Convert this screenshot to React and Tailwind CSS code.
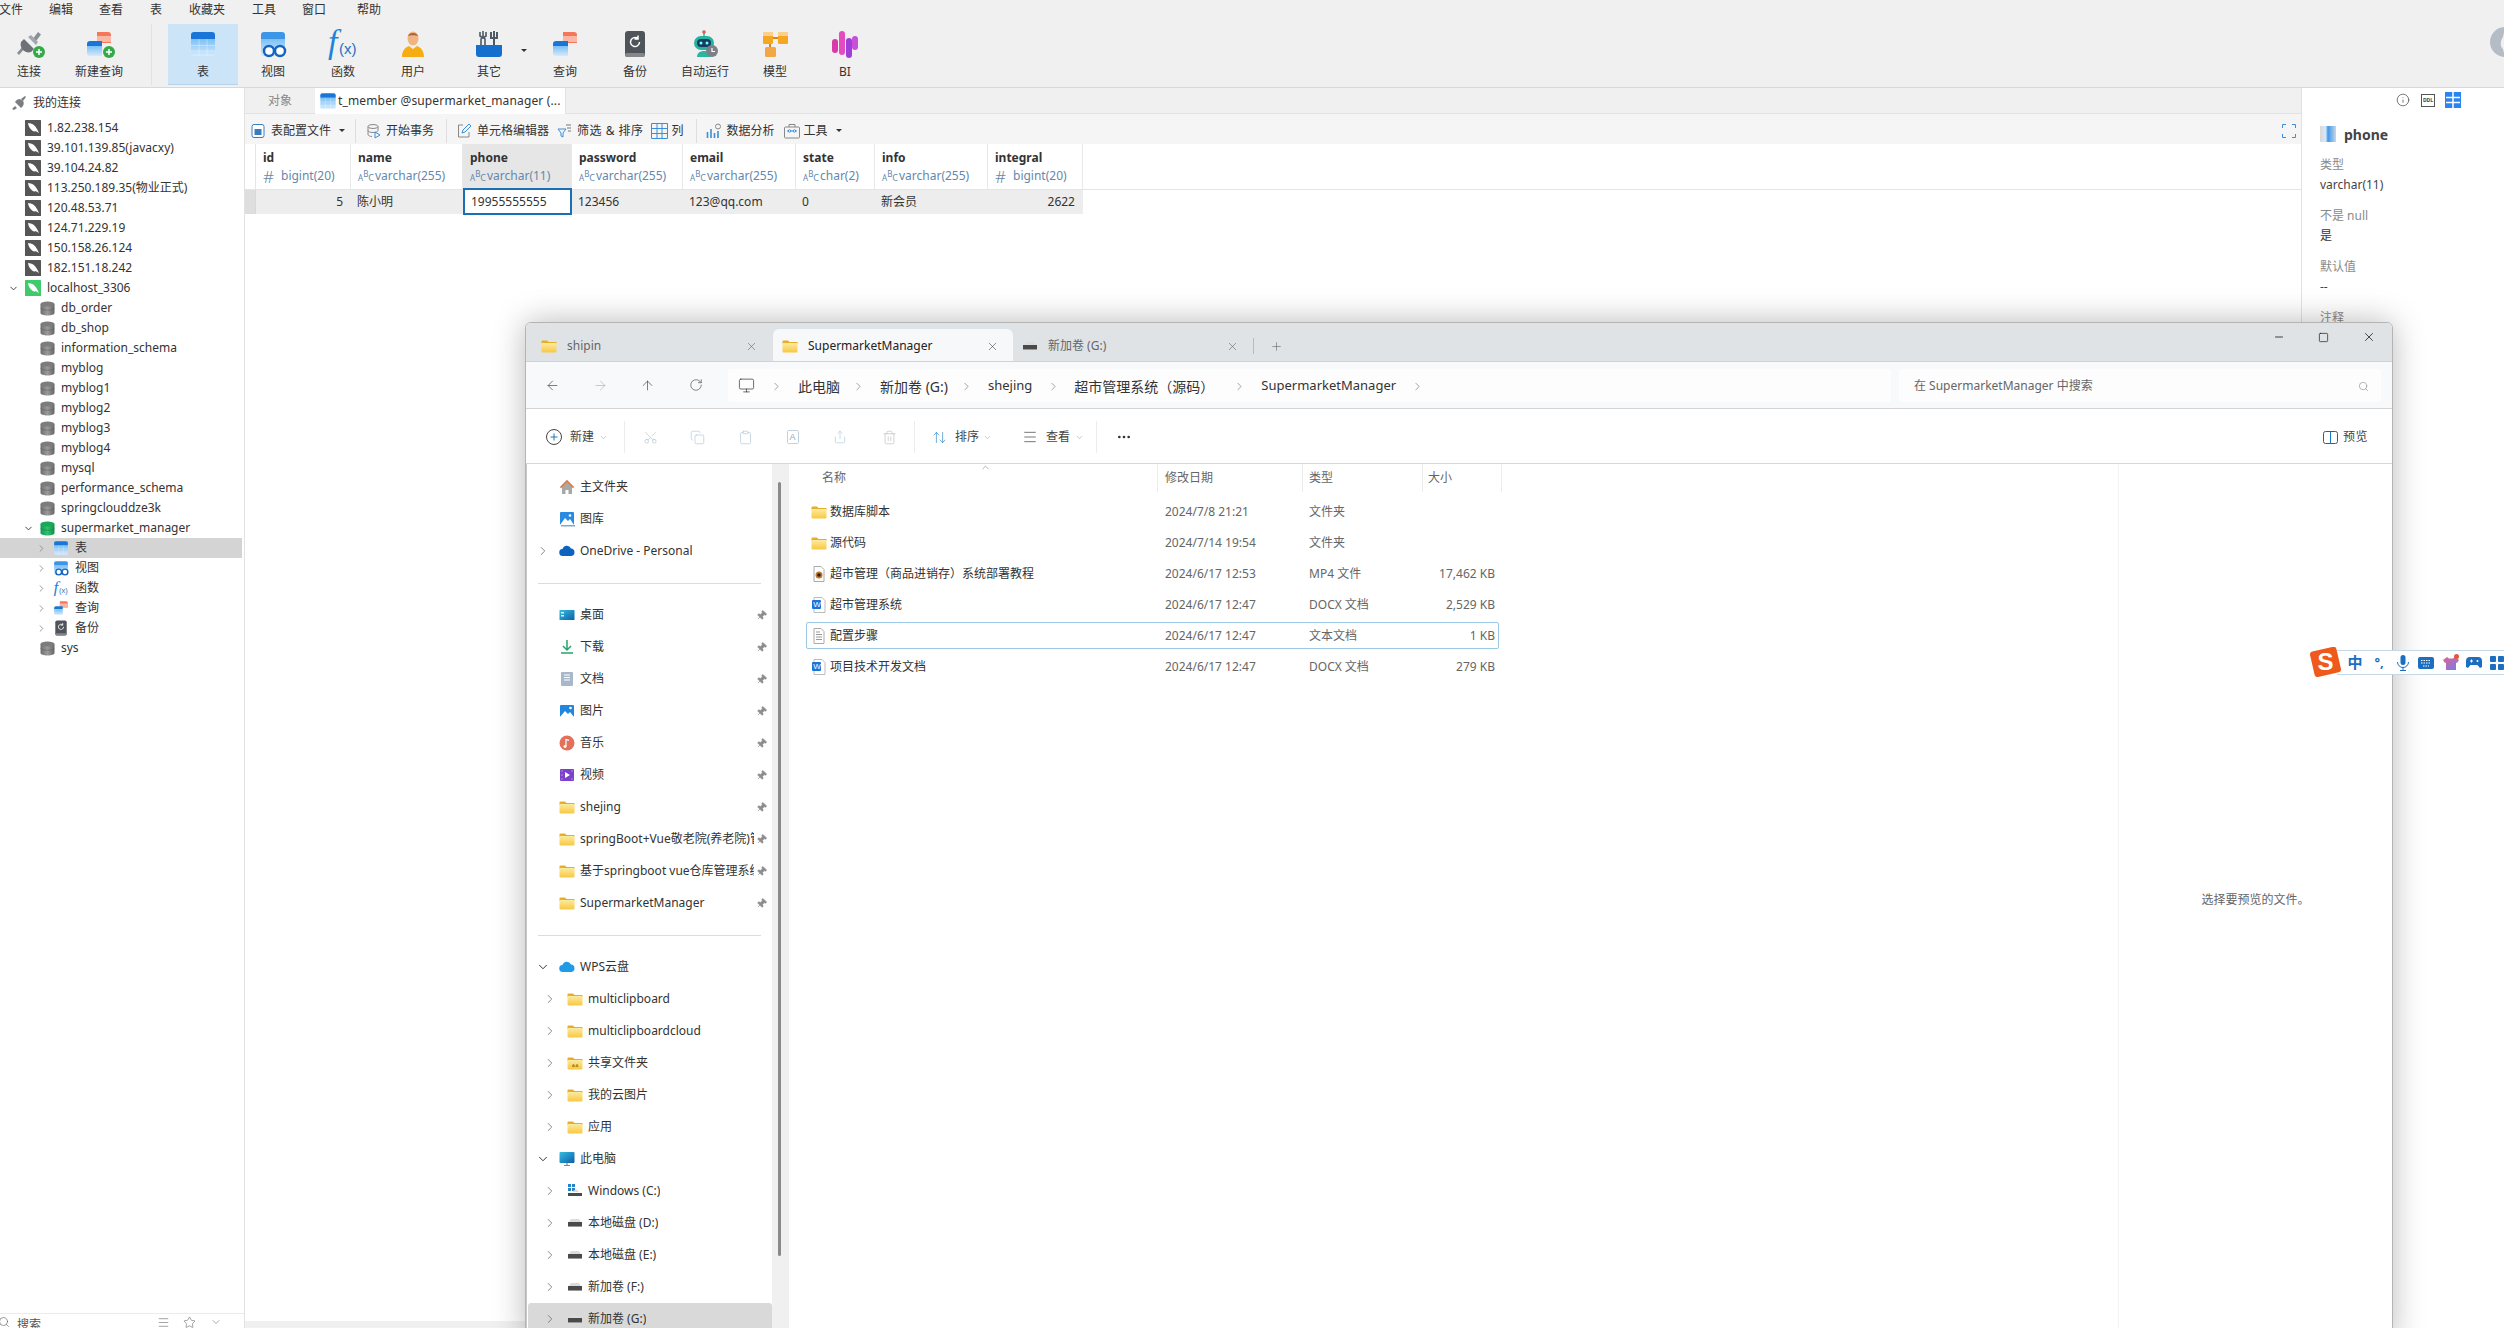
import React from 'react';
import { ChevronRight, ChevronDown, ChevronUp, ArrowLeft, ArrowRight, ArrowUp, RotateCw, Search, Plus, X, Minus, Square, Scissors, Copy, Clipboard, Share, Trash2, ArrowUpDown, Menu, MoreHorizontal, Pin, Info, Star, Monitor } from 'lucide-react';

const Defs = () => (
  <svg className="absolute w-0 h-0">
    <defs>
      <linearGradient id="gFolder" x1="0" y1="0" x2="0" y2="1"><stop offset="0" stopColor="#fdeaa0" /><stop offset="1" stopColor="#f8c840" /></linearGradient>
      <linearGradient id="gTable" x1="0" y1="0" x2="0" y2="1"><stop offset="0" stopColor="#7cc0f5" /><stop offset="1" stopColor="#d5eafc" /></linearGradient>
      <linearGradient id="gDb" x1="0" y1="0" x2="1" y2="0"><stop offset="0" stopColor="#6f6f6f" /><stop offset="0.5" stopColor="#9a9a9a" /><stop offset="1" stopColor="#666" /></linearGradient>
      <linearGradient id="gDbG" x1="0" y1="0" x2="1" y2="0"><stop offset="0" stopColor="#149a50" /><stop offset="0.5" stopColor="#30c070" /><stop offset="1" stopColor="#119048" /></linearGradient>
      <linearGradient id="gPhone" x1="0" y1="0" x2="1" y2="0"><stop offset="0" stopColor="#d8d8d8" /><stop offset="0.35" stopColor="#d8e8f4" /><stop offset="0.5" stopColor="#3d97ea" /><stop offset="1" stopColor="#c8d8e4" /></linearGradient>
      <linearGradient id="gDesk" x1="0" y1="0" x2="1" y2="1"><stop offset="0" stopColor="#35bde0" /><stop offset="1" stopColor="#0b5fa8" /></linearGradient>
      <linearGradient id="gShirt" x1="0" y1="0" x2="1" y2="1"><stop offset="0" stopColor="#e0648c" /><stop offset="1" stopColor="#6f7cf5" /></linearGradient>
    </defs>
  </svg>
);

const S = ({ size = 16, vb = 16, children, className = '' }) => (
  <svg width={size} height={size} viewBox={`0 0 ${vb} ${vb}`} className={'shrink-0 ' + className}>{children}</svg>
);

const Host = ({ green }) => (
  <S><rect width="16" height="16" fill={green ? '#3ecb6c' : '#565656'} rx="0.5" /><path d="M3 3c4 0 7 2 9 6l2 4-3.500-2c-1 .8-2 .6-3-.2C5 9 3.500 6.500 3 3z" fill="#fff" /></S>
);
const Db = ({ green }) => (
  <S size={15} vb={15}><path d="M.5 3v9c0 1.400 3 2.500 7 2.500s7-1.100 7-2.500V3z" fill={green ? 'url(#gDbG)' : 'url(#gDb)'} /><ellipse cx="7.500" cy="3" rx="7" ry="2.500" fill={green ? '#18a858' : '#7c7c7c'} /><path d="M.5 7.500c1 1 3.500 1.700 7 1.700s6-.7 7-1.700" stroke={green ? '#0d8a44' : '#5f5f5f'} fill="none" strokeWidth=".6" /></S>
);
const TableIco = ({ size = 16 }) => (
  <S size={size} vb={28}><path d="M2 9h24v15a2 2 0 0 1-2 2H4a2 2 0 0 1-2-2z" fill="url(#gTable)" /><path d="M2 9V5a3 3 0 0 1 3-3h18a3 3 0 0 1 3 3v4z" fill="#1976d8" /><path d="M10 9v17M18 9v17M2 15.500h24M2 21h24" stroke="#fff" strokeOpacity=".35" strokeWidth="1" /></S>
);
const ViewIco = ({ size = 16 }) => (
  <S size={size} vb={28}><path d="M2 9h24v15a2 2 0 0 1-2 2H4a2 2 0 0 1-2-2z" fill="url(#gTable)" /><path d="M2 9V5a3 3 0 0 1 3-3h18a3 3 0 0 1 3 3v4z" fill="#3d95e6" /><circle cx="10" cy="21" r="5" fill="#fff" stroke="#1565c0" strokeWidth="2.500" /><circle cx="21" cy="21" r="5" fill="#fff" stroke="#1565c0" strokeWidth="2.500" /></S>
);
const FnIco = ({ size = 32 }) => (
  <S size={size} vb={32}>
    <text x="1" y="25" fontFamily="Liberation Serif" fontStyle="italic" fontSize="34" fill="#1d84dc">f</text>
    <text x="12" y="26" fontFamily="Liberation Sans" fontSize="15" fill="#1d6fc4">(x)</text>
  </S>
);
const QueryIco = ({ size = 16 }) => (
  <S size={size} vb={28}><path d="M12 2h11a3 3 0 0 1 3 3v8H12z" fill="#f4775a" /><path d="M12 6h14v6H12z" fill="#f9b8a4" /><path d="M2 14a3 3 0 0 1 3-3h12v5H2z" fill="#1976d8" /><path d="M2 16h15v10H5a3 3 0 0 1-3-3z" fill="url(#gTable)" /></S>
);
const BackupIco = ({ size = 16 }) => (
  <S size={size} vb={28}><rect x="4" y="1" width="20" height="26" rx="3" fill="#4e5459" /><rect x="4" y="23" width="20" height="4" rx="2" fill="#83878b" /><path d="M18.500 12a4.500 4.500 0 1 1-1.700-3.500M17 5.500v3.500h-3.500" stroke="#fff" strokeWidth="1.500" fill="none" /></S>
);
const PlugIco = ({ size = 28 }) => (
  <S size={size} vb={28}><path d="M17 10l6-8 3 2.500-6 8zM11 17l-7 8-2-2 7-8z" fill="#8a8f94" /><path d="M9 9l10 10-3 3c-3 1-6 0-8-2s-3-5-2-8z" fill="#6c7277" /><path d="M13 7l8 8 2-3-7-7z" fill="#a2a7ab" /></S>
);
const PlusBadge = () => (
  <svg width="12" height="12" viewBox="0 0 12 12" className="absolute -right-[2px] bottom-0"><circle cx="6" cy="6" r="6" fill="#35a848" /><path d="M3 6h6M6 3v6" stroke="#fff" strokeWidth="1.500" /></svg>
);
const UserIco = () => (
  <S size={28} vb={28}><ellipse cx="14" cy="8.500" rx="5.500" ry="7" fill="#f0b483" /><path d="M9 6c1-4 9-4 10 0-2-1-8-1-10 0z" fill="#a3643a" /><path d="M3 27c0-7 4-10 7-11l4 3 4-3c3 1 7 4 7 11z" fill="#f6ad13" /></S>
);
const ToolsIco = () => (
  <S size={28} vb={28}>
    <path d="M8 1v6l-2 2v8h4V9L8 7M5 2v4l3 2 3-2V2" stroke="#4d5a66" strokeWidth="1.600" fill="none" />
    <path d="M19 1v16M16 2v6h6V2" stroke="#4d5a66" strokeWidth="2" fill="none" />
    <path d="M1 15h26v9a3 3 0 0 1-3 3H4a3 3 0 0 1-3-3z" fill="#1470cc" />
  </S>
);
const RobotIco = () => (
  <S size={28} vb={28}>
    <circle cx="13" cy="2" r="1.800" fill="#e0594a" /><path d="M13 3v3" stroke="#3bb0a0" strokeWidth="1.500" />
    <rect x="3" y="6" width="20" height="14" rx="7" fill="#26b3a0" /><rect x="6" y="9" width="14" height="8" rx="4" fill="#143c5e" />
    <circle cx="10" cy="13" r="1.500" fill="#7ff" /><circle cx="16" cy="13" r="1.500" fill="#7ff" />
    <path d="M6 27c0-4 3-6 7-6s7 2 7 6z" fill="#2ab59f" />
    <circle cx="21" cy="21" r="6" fill="#7b8187" /><path d="M21 18v3.500h3" stroke="#fff" strokeWidth="1.200" fill="none" />
  </S>
);
const ModelIco = () => (
  <S size={28} vb={28}>
    <rect x="2" y="2" width="10" height="12" rx="1.500" fill="#f5a623" /><rect x="17" y="2" width="10" height="12" rx="1.500" fill="#f5a623" /><rect x="4" y="17" width="11" height="10" rx="1.500" fill="#f2a644" />
    <path d="M12 8h5M9 14v3" stroke="#d08a20" strokeWidth="2" /><path d="M2 2h10v4H2zM17 2h10v4H17z" fill="#fcd08a" />
  </S>
);
const BiIco = () => (
  <S size={28} vb={28}>
    <rect x="1" y="9" width="6" height="14" rx="3" fill="#d83aa8" /><rect x="8" y="1" width="6" height="24" rx="3" fill="#e34cc0" /><rect x="15" y="8" width="6" height="20" rx="3" fill="#a23ed8" /><rect x="21" y="6" width="6" height="14" rx="3" fill="#c750d8" />
  </S>
);
const Folder = ({ people }) => (
  <S><path d="M.5 3.500a1 1 0 0 1 1-1H6l1.500 1.500h8v2H.5z" fill="#e6ae28" /><path d="M.5 5h15v8.500a1 1 0 0 1-1 1h-13a1 1 0 0 1-1-1z" fill="url(#gFolder)" />{people && <path d="M5 12c0-2 1-3 1.500-3S8 10 8 12zM8.500 12c0-2 1-3 1.500-3s1.500 1 1.500 3z" fill="#b98a20" />}</S>
);
const Drive = () => (
  <S><path d="M2 7l2-3h8l2 3z" fill="#dcdcdc" /><rect x="1" y="7" width="14" height="4" fill="#4a4a4a" /><rect x="1" y="11" width="14" height="1" fill="#9a9a9a" /></S>
);
const WinDrive = () => (
  <S><path d="M1 1h3v3H1zM5 1h3v3H5zM1 5h3v3H1zM5 5h3v3H5z" fill="#2683c6" /><path d="M5 9l4-3 3 3z" fill="#dcdcdc" /><rect x="1" y="10" width="14" height="3" fill="#4a4a4a" /></S>
);
const HomeI = () => (<S><path d="M8 1L1 8l1 1 1-1v7h3.500v-4h3v4H13V8l1 1 1-1z" fill="#a8a8a8" /><path d="M8 1L1 8l1 1 6-6 6 6 1-1z" fill="#e8743a" /></S>);
const GalleryI = () => (<S><rect x="1" y="1" width="14" height="13" rx="1" fill="#2a8ae0" /><path d="M1 14l5-7 3 3 2-2 4 6z" fill="#fff" /><rect x="2" y="14" width="14" height="1.500" fill="#7fa9cf" /><circle cx="11" cy="4.500" r="1.300" fill="#fff" /></S>);
const CloudI = ({ c = '#0c64c0' }) => (<S><path d="M4 13a3.500 3.500 0 0 1-.5-7A4.500 4.500 0 0 1 12 5.500 3.800 3.800 0 0 1 12.500 13z" fill={c} /></S>);
const DeskI = () => (<S><rect x=".5" y="3" width="15" height="10" rx=".5" fill="url(#gDesk)" /><rect x="2" y="5" width="3" height="1.500" fill="#d8f2fa" /><rect x="2" y="8" width="3" height="1.500" fill="#d8f2fa" /></S>);
const DownI = () => (<S><path d="M8 1v9M4 7l4 4 4-4" stroke="#25a56b" strokeWidth="1.500" fill="none" /><path d="M2 14h12" stroke="#25a56b" strokeWidth="1.500" /></S>);
const DocI = () => (<S><rect x="2" y="1" width="12" height="14" rx="1" fill="#a9b8c8" /><path d="M5 4h6M5 6.500h6M5 9h6" stroke="#fff" strokeWidth="1" /></S>);
const PicI = () => (<S><rect x="1" y="2" width="14" height="12" rx="1" fill="#1f87e0" /><path d="M1 14l5-6 3 3 2-2 4 5z" fill="#fff" /><circle cx="11.500" cy="5" r="1.300" fill="#fff" /></S>);
const MusicI = () => (<S><circle cx="8" cy="8" r="7.500" fill="#e4705a" /><path d="M7 11.500V4.500l3 .8" stroke="#fff" strokeWidth="1.200" fill="none" /><circle cx="6" cy="11.500" r="1.400" fill="#fff" /></S>);
const VideoI = () => (<S><rect x="1" y="2" width="14" height="12" rx="1" fill="#7b40cc" /><path d="M6 5l5 3-5 3z" fill="#fff" /><path d="M2.500 4h1M2.500 8h1M2.500 12h1M12.500 4h1M12.500 12h1" stroke="#ddd" /></S>);
const PcI = () => (<S><rect x=".5" y="1" width="15" height="11" rx="1" fill="url(#gDesk)" /><path d="M8 12v2M5 14.500h6" stroke="#6d8ca3" strokeWidth="1.200" /></S>);
const Mp4I = () => (<S><path d="M3 .5h7l3 3v12H3z" fill="#fff" stroke="#aaa" /><circle cx="8" cy="9" r="3.500" fill="#c8762a" /><circle cx="8" cy="9" r="1.800" fill="#222" /></S>);
const WordI = () => (
  <S><path d="M3 .5h8l3 3v12H3z" fill="#fff" stroke="#bbb" /><rect x="1" y="3" width="9" height="9" rx="1" fill="#1b75d8" /><text x="2.300" y="10.300" fontSize="8" fill="#fff" fontFamily="Liberation Sans">W</text></S>
);
const TxtI = () => (<S><path d="M3 .5h7l3 3v12H3z" fill="#fff" stroke="#aaa" /><path d="M5 4h4M5 6.500h6M5 9h6M5 11.500h6" stroke="#999" /></S>);

const menus = [['文件', 'ml-[-1px]'], ['编辑', 'ml-[26px]'], ['查看', 'ml-[26px]'], ['表', 'ml-[27px]'], ['收藏夹', 'ml-[27px]'], ['工具', 'ml-[27px]'], ['窗口', 'ml-[26px]'], ['帮助', 'ml-[31px]']];

const Tool = ({ icon, label, cls = 'w-[70px]', sel }) => (
  <div className={`flex flex-col items-center h-[61px] pt-[6px] relative ${cls} ${sel ? 'bg-[#cce4f7] border-b border-[#b5d4ec]' : ''}`}>
    <div className="relative h-[28px] flex items-center justify-center">{icon}</div>
    <div className="mt-[6px] leading-4 text-[#333]">{label}</div>
  </div>
);

const hosts = ['1.82.238.154', '39.101.139.85(javacxy)', '39.104.24.82', '113.250.189.35(物业正式)', '120.48.53.71', '124.71.229.19', '150.158.26.124', '182.151.18.242'];
const dbs = ['db_order', 'db_shop', 'information_schema', 'myblog', 'myblog1', 'myblog2', 'myblog3', 'myblog4', 'mysql', 'performance_schema', 'springclouddze3k'];
const subs = [['表', <TableIco />, true], ['视图', <ViewIco />], ['函数', <FnIco size={16} />], ['查询', <QueryIco />], ['备份', <BackupIco size={16} />]];

const Sidebar = () => (
  <div className="w-[245px] shrink-0 flex flex-col border-r border-[#e2e2e2] text-[#333]">
    <div className="h-[30px] flex items-center pl-[11px] gap-[6px] shrink-0">
      <svg width="16" height="14" viewBox="0 0 16 14"><path d="M1 13l3-3 2 2-3 2zM4 6l6 6 2-2c1-2 1-4 0-5L9 3C7 3 5 4 4 6zM10 3l4-3 1 1-3 4z" fill="#7b7f83" /></svg>
      <span>我的连接</span>
    </div>
    {hosts.map(h => (
      <div key={h} className="h-5 flex items-center pl-[25px] gap-[6px] whitespace-nowrap"><Host /><span>{h}</span></div>
    ))}
    <div className="h-5 flex items-center pl-[8px] gap-[6px]"><ChevronDown size={11} strokeWidth={2} className="text-[#333]" /><Host green /><span>localhost_3306</span></div>
    {dbs.map(d => (
      <div key={d} className="h-5 flex items-center pl-[40px] gap-[6px]"><Db /><span>{d}</span></div>
    ))}
    <div className="h-5 flex items-center pl-[23px] gap-[6px]"><ChevronDown size={11} strokeWidth={2} className="text-[#333]" /><Db green /><span>supermarket_manager</span></div>
    {subs.map(([t, ic, sel]) => (
      <div key={t} className={`h-5 flex items-center pl-[36px] mr-[2px] ${sel ? 'bg-[#d4d4d4]' : ''}`}>
        <ChevronRight size={11} strokeWidth={1.800} className="text-[#888]" /><span className="w-[6px]" />{ic}<span className="ml-[6px]">{t}</span>
      </div>
    ))}
    <div className="h-5 flex items-center pl-[40px] gap-[6px]"><Db /><span>sys</span></div>
    <div className="mt-auto h-[15px] overflow-hidden border-t border-[#ececec] flex items-start pt-[2px] text-[#555] shrink-0">
      <Search size={12} strokeWidth={1.200} className="shrink-0 -ml-[2px]" /><span className="ml-[7px]">搜索</span>
      <Menu size={13} strokeWidth={1} className="ml-[116px]" /><Star size={13} strokeWidth={1} className="ml-[13px]" /><ChevronDown size={12} strokeWidth={1} className="ml-[14px]" />
    </div>
  </div>
);

const Abc = () => (
  <span className="inline-flex items-end w-[15px] text-[8px] leading-none h-[12px] shrink-0"><span>A</span><span className="mb-[4px]">B</span><span className="text-[9px]">C</span></span>
);

const cols = [
  ['id', 'bigint(20)', 'w-[95px]', '#'], ['name', 'varchar(255)', 'w-[112px]'], ['phone', 'varchar(11)', 'w-[109px]'], ['password', 'varchar(255)', 'w-[111px]'],
  ['email', 'varchar(255)', 'w-[113px]'], ['state', 'char(2)', 'w-[79px]'], ['info', 'varchar(255)', 'w-[113px]'], ['integral', 'bigint(20)', 'w-[95px]', '#'],
];
const cells = ['5', '陈小明', '19955555555', '123456', '123@qq.com', '0', '新会员', '2622'];

const Sep = ({ cls }) => <div className={`w-px h-[24px] bg-[#dedede] ${cls}`} />;
const Caret = ({ cls = '' }) => <span className={`w-0 h-0 border-x-[3px] border-x-transparent border-t-[3.500px] border-t-[#333] ${cls}`} />;

const Grid = () => (
  <div className="pl-0">
    <div className="flex h-[46px] border-b border-[#e4e4e4]">
      <div className="w-[11px] border-r border-[#e4e4e4]" />
      {cols.map((c, i) => (
        <div key={c[0]} className={`${c[2]} shrink-0 border-r border-[#e8e8e8] pl-[7px] flex flex-col ${i === 2 ? 'bg-[#e6e6e6]' : ''}`}>
          <div className="h-[23px] pt-[6px] font-bold text-[#333] leading-4">{c[0]}</div>
          <div className="flex items-center text-[#6488ad] h-[18px] whitespace-nowrap">
            {c[3] ? <span className="text-[17px] font-light w-[16px] leading-none">#</span> : <Abc />}
            <span className="ml-[2px]">{c[1]}</span>
          </div>
        </div>
      ))}
    </div>
    <div className="flex h-[24px] w-[838px] bg-[#ededed] text-[#333]">
      <div className="w-[11px] bg-[#dedede] border-r border-[#d8d8d8]" />
      {cols.map((c, i) => (
        <div key={c[0]} className={`${c[2]} shrink-0 flex items-center pl-[6px] pr-[8px] ${i === 2 ? 'bg-white border-2 border-[#1a6fb5] h-[27px] -mt-[2px] relative' : ''} ${i === 0 || i === 7 ? 'justify-end' : ''}`}>{cells[i]}</div>
      ))}
    </div>
  </div>
);

const MainArea = () => (
  <div className="flex-1 min-w-0 flex flex-col">
    <div className="h-[26px] bg-[#f0f0f0] flex items-end border-b border-[#e2e2e2] shrink-0">
      <div className="w-[70px] h-full flex items-center justify-center text-[#888]">对象</div>
      <div className="w-[251px] h-[26px] bg-white flex items-center pl-[4px] border-r border-[#e2e2e2] whitespace-nowrap text-[#333] overflow-hidden -mb-px tracking-[0.15px]">
        <TableIco size={18} /><span className="ml-[1px]">t_member @supermarket_manager (...</span>
      </div>
    </div>
    <div className="h-[30px] bg-[#f5f5f5] flex items-center pt-[3px] text-[#333] shrink-0 whitespace-nowrap">
      <S className="ml-[6px]" size={14} vb={14}><rect x="1" y=".5" width="12" height="13" rx="2" fill="#fff" stroke="#3a7dbf" /><rect x="3.500" y="5" width="7" height="6" fill="#3a7dbf" /></S>
      <span className="ml-[6px]">表配置文件</span><Caret cls="ml-[8px]" /><Sep cls="ml-[10px]" />
      <svg width="16" height="16" viewBox="0 0 16 16" className="ml-[10px]"><ellipse cx="7" cy="3.500" rx="5" ry="2" fill="none" stroke="#888" /><path d="M2 3.500v8c0 1 2 2 4 2M12 3.500v4M2 7.500c0 1 2 2 5 2s5-1 5-2" fill="none" stroke="#888" /><path d="M9 9l5 3-5 3z" fill="none" stroke="#3a8fd8" /></svg>
      <span className="ml-[4px]">开始事务</span><Sep cls="ml-[12px]" />
      <svg width="15" height="15" viewBox="0 0 15 15" className="ml-[10px]"><path d="M6 2H1.500v12H12V9" fill="none" stroke="#888" /><path d="M5 10l1-3 6-6 2 2-6 6z" fill="none" stroke="#3a8fd8" /></svg>
      <span className="ml-[5px]">单元格编辑器</span>
      <svg width="16" height="16" viewBox="0 0 16 16" className="ml-[8px]"><path d="M1 6h8L6 10v4l-2-1v-3z" fill="none" stroke="#3a8fd8" /><path d="M9 2h5M10 5h4M11 8h3" stroke="#777" /></svg>
      <span className="ml-[4px] tracking-[0.5px]">筛选 &amp; 排序</span>
      <svg width="17" height="16" viewBox="0 0 17 16" className="ml-[7px]"><path d="M.5.5h16v15H.5zM6 .5v15M11 .5v15M.5 5.500h16M.5 10.500h16" fill="none" stroke="#3a8fd8" /></svg>
      <span className="ml-[4px]">列</span><Sep cls="ml-[12px]" />
      <svg width="17" height="16" viewBox="0 0 17 16" className="ml-[9px]"><path d="M1.500 9v6M5 6v9M8.500 10v5M12 8v7" stroke="#3a8fd8" strokeWidth="1.600" /><circle cx="12" cy="3.500" r="2.500" fill="none" stroke="#888" /></svg>
      <span className="ml-[4px]">数据分析</span>
      <svg width="16" height="16" viewBox="0 0 16 16" className="ml-[9px]"><rect x=".5" y="4" width="15" height="11" rx="1" fill="none" stroke="#888" /><path d="M5 4V1.500h6V4" fill="none" stroke="#888" /><path d="M3 8h10" stroke="#3a8fd8" /><circle cx="5.500" cy="8" r="1.200" fill="#fff" stroke="#3a8fd8" /><circle cx="10.500" cy="8" r="1.200" fill="#fff" stroke="#3a8fd8" /></svg>
      <span className="ml-[4px]">工具</span><Caret cls="ml-[8px]" />
      <svg width="14" height="14" viewBox="0 0 14 14" className="ml-auto mr-[5px]"><path d="M4 .5H.5V4M10 .5h3.500V4M4 13.500H.5V10M10 13.500h3.500V10" fill="none" stroke="#3a8fd8" /></svg>
    </div>
    <Grid />
    <div className="mt-auto h-[7px] bg-[#f0f0f0]" />
  </div>
);

const RightPanel = () => (
  <div className="w-[203px] shrink-0 border-l border-[#e2e2e2] pl-[18px] text-[#444]">
    <div className="h-[24px] flex items-center">
      <Info size={14} strokeWidth={1.200} className="ml-[76px] text-[#444]" />
      <div className="ml-[11px] w-[14px] h-[13px] border border-[#555] text-[5px] leading-none font-bold flex items-center justify-center">DDL</div>
      <svg width="16" height="16" viewBox="0 0 16 16" className="ml-[10px]"><rect width="16" height="16" fill="#2a85f0" /><path d="M8 0v16M1 5.500h14M1 10.500h14" stroke="#fff" strokeWidth="1.500" /></svg>
    </div>
    <div className="mt-[12px] h-5 flex items-center">
      <svg width="16" height="16" viewBox="0 0 16 16"><rect width="16" height="16" fill="url(#gPhone)" /></svg>
      <span className="ml-[8px] text-[14px] font-bold text-[#444]">phone</span>
    </div>
    <div className="mt-[11px]">
      <div className="h-5 leading-5 text-[#8a8a8a]">类型</div><div className="h-5 leading-5">varchar(11)</div>
      <div className="h-5 leading-5 mt-[11px] text-[#8a8a8a]">不是 null</div><div className="h-5 leading-5 text-[#333]">是</div>
      <div className="h-5 leading-5 mt-[11px] text-[#8a8a8a]">默认值</div><div className="h-5 leading-5">--</div>
      <div className="h-5 leading-5 mt-[11px] text-[#8a8a8a]">注释</div>
    </div>
  </div>
);

const PinI = () => <Pin size={11} className="text-[#8e8e8e] fill-[#8e8e8e] rotate-45 shrink-0" strokeWidth={1.500} />;

const NavRow = ({ icon, text, pin, chev, nested, sel }) => (
  <div className={`h-[32px] flex items-center relative ${nested ? 'pl-[18px]' : 'pl-[11px]'} ${sel ? 'bg-[#d9d9d9] rounded-[3px] ml-[1px]' : ''}`}>
    <div className={`w-[10px] shrink-0 flex justify-center ${sel ? '-ml-px' : ''}`}>
      {chev === 'r' && <ChevronRight size={14} strokeWidth={1.500} className="text-[#777] shrink-0" />}
      {chev === 'd' && <ChevronDown size={14} strokeWidth={1.700} className="text-[#333] shrink-0" />}
    </div>
    <div className={`${nested ? 'ml-[12px]' : 'ml-[11px]'} w-[16px] flex justify-center shrink-0`}>{icon}</div>
    <span className={`ml-[5px] whitespace-nowrap overflow-hidden text-[#333] ${pin ? 'w-[174px] shrink-0' : ''}`}>{text}</span>
    {pin && <span className="ml-[2px]"><PinI /></span>}
  </div>
);

const NavDiv = ({ cls }) => <div className={`h-px bg-[#dcdcdc] mx-[11px] ${cls}`} />;

const quick = [[<DeskI />, '桌面'], [<DownI />, '下载'], [<DocI />, '文档'], [<PicI />, '图片'], [<MusicI />, '音乐'], [<VideoI />, '视频'], [<Folder />, 'shejing'], [<Folder />, 'springBoot+Vue敬老院(养老院)管理系统'], [<Folder />, '基于springboot vue仓库管理系统'], [<Folder />, 'SupermarketManager']];

const NavPane = () => (
  <div className="w-[246px] shrink-0 overflow-hidden pt-[7px] border-l border-[#c8c8c8]">
    <NavRow icon={<HomeI />} text="主文件夹" />
    <NavRow icon={<GalleryI />} text="图库" />
    <NavRow icon={<CloudI />} text="OneDrive - Personal" chev="r" />
    <NavDiv cls="mt-[16px] mb-[15px]" />
    {quick.map(([ic, t]) => <NavRow key={t} icon={ic} text={t} pin />)}
    <NavDiv cls="mt-[16px] mb-[15px]" />
    <NavRow icon={<CloudI c="#1f9be8" />} text="WPS云盘" chev="d" />
    <NavRow nested icon={<Folder />} text="multiclipboard" chev="r" />
    <NavRow nested icon={<Folder />} text="multiclipboardcloud" chev="r" />
    <NavRow nested icon={<Folder people />} text="共享文件夹" chev="r" />
    <NavRow nested icon={<Folder />} text="我的云图片" chev="r" />
    <NavRow nested icon={<Folder />} text="应用" chev="r" />
    <NavRow icon={<PcI />} text="此电脑" chev="d" />
    <NavRow nested icon={<WinDrive />} text="Windows (C:)" chev="r" />
    <NavRow nested icon={<Drive />} text="本地磁盘 (D:)" chev="r" />
    <NavRow nested icon={<Drive />} text="本地磁盘 (E:)" chev="r" />
    <NavRow nested icon={<Drive />} text="新加卷 (F:)" chev="r" />
    <NavRow nested sel icon={<Drive />} text="新加卷 (G:)" chev="r" />
  </div>
);

const files = [
  [<Folder />, '数据库脚本', '2024/7/8 21:21', '文件夹', ''],
  [<Folder />, '源代码', '2024/7/14 19:54', '文件夹', ''],
  [<Mp4I />, '超市管理（商品进销存）系统部署教程', '2024/6/17 12:53', 'MP4 文件', '17,462 KB'],
  [<WordI />, '超市管理系统', '2024/6/17 12:47', 'DOCX 文档', '2,529 KB'],
  [<TxtI />, '配置步骤', '2024/6/17 12:47', '文本文档', '1 KB'],
  [<WordI />, '项目技术开发文档', '2024/6/17 12:47', 'DOCX 文档', '279 KB'],
];

const FileList = () => (
  <div className="w-[1330px] shrink-0 border-r border-[#f3f3f3]">
    <div className="h-[28px] flex text-[#666] relative">
      <ChevronUp size={11} strokeWidth={1.200} className="absolute left-[191px] -top-[2px] text-[#777]" />
      <div className="w-[369px] pl-[33px] flex items-center border-r border-[#ececec]">名称</div>
      <div className="w-[145px] pl-[7px] flex items-center border-r border-[#ececec]">修改日期</div>
      <div className="w-[120px] pl-[6px] flex items-center border-r border-[#ececec]">类型</div>
      <div className="w-[79px] pl-[5px] flex items-center border-r border-[#ececec]">大小</div>
    </div>
    <div className="pt-[4px]">
      {files.map((f, i) => (
        <div key={f[1]} className="h-[31px] flex items-center">
          <div className={`h-[27px] flex items-center w-[693px] ml-[17px] whitespace-nowrap rounded-[2px] ${i === 4 ? 'border border-[#9cc8e8]' : 'border border-transparent'}`}>
            <div className="w-[358px] flex items-center shrink-0 text-[#333] pl-[4px]">{f[0]}<span className="ml-[3px]">{f[1]}</span></div>
            <div className="w-[144px] shrink-0 text-[#666]">{f[2]}</div>
            <div className="w-[120px] shrink-0 text-[#666]">{f[3]}</div>
            <div className="w-[66px] shrink-0 text-right text-[#666]">{f[4]}</div>
          </div>
        </div>
      ))}
    </div>
  </div>
);

const Cmd = ({ cls, children }) => <span className={`w-[16px] flex justify-center shrink-0 ${cls}`}>{children}</span>;
const Chev = ({ cls }) => <ChevronDown size={9} strokeWidth={1.200} className={`text-[#888] ${cls}`} />;
const Crumb = ({ cls = '' }) => <ChevronRight size={13} strokeWidth={1} className={`text-[#555] shrink-0 ${cls}`} />;
const CmdSep = ({ cls }) => <div className={`w-px h-[32px] bg-[#ececec] shrink-0 ${cls}`} />;

const TabRow = ({ w, active, icon, text, closeCls }) => (
  <div className={`h-[32px] pt-[2px] flex items-center shrink-0 ${w} ${active ? 'bg-[#f6f8f9] rounded-t-[6px] text-[#222]' : 'text-[#666]'}`}>
    {icon}
    <span className="ml-[10px] whitespace-nowrap">{text}</span>
    <X size={13} strokeWidth={1} className={`ml-auto ${closeCls} ${active ? 'text-[#333]' : 'text-[#555]'}`} />
  </div>
);

const Explorer = () => (
  <div className="absolute left-[525px] top-[322px] w-[1868px] h-[1020px] bg-white rounded-t-[6px] border border-[#b4b4b4] shadow-[0_0_32px_rgba(0,0,0,0.28)] flex flex-col text-[#333]">
    <div className="h-[39px] bg-[#dfe3e6] rounded-t-[6px] flex items-end shrink-0 border-b border-[#cfd3d6]">
      <TabRow w="w-[247px]" icon={<span className="ml-[15px]"><Folder /></span>} text="shipin" closeCls="mr-[15px]" />
      <TabRow w="w-[240px]" active icon={<span className="ml-[9px]"><Folder /></span>} text="SupermarketManager" closeCls="mr-[14px]" />
      <TabRow w="w-[240px]" icon={<span className="ml-[9px]"><Drive /></span>} text="新加卷 (G:)" closeCls="mr-[14px]" />
      <div className="w-px h-[16px] bg-[#bbb] self-center mt-[8px]" />
      <Plus size={13} strokeWidth={1} className="ml-[16px] self-center mt-[8px] text-[#555]" />
      <div className="ml-auto self-start flex items-center h-[28px] text-[#222]">
        <Minus size={12} strokeWidth={1.700} /><Square size={11} strokeWidth={1.600} className="ml-[33px]" /><X size={14} strokeWidth={1.400} className="ml-[33px] mr-[16px]" />
      </div>
    </div>
    <div className="h-[47px] bg-[#f7f9fa] flex items-center border-b border-[#d4d4d4] shrink-0">
      <ArrowLeft size={15} strokeWidth={1} className="ml-[19px] text-[#333]" />
      <ArrowRight size={15} strokeWidth={1} className="ml-[33px] text-[#aaa]" />
      <ArrowUp size={15} strokeWidth={1} className="ml-[32px] text-[#333]" />
      <RotateCw size={14} strokeWidth={1} className="ml-[34px] text-[#333]" />
      <div className="ml-[25px] w-[1163px] h-[33px] bg-[#fdfdfd] rounded-[3px] flex items-center pt-[2px] whitespace-nowrap shrink-0 text-[14px]">
        <Monitor size={17} strokeWidth={1} className="ml-[10px] -mt-[2px] text-[#333]" />
        <Crumb cls="ml-[15px]" /><span className="ml-[15px]">此电脑</span>
        <Crumb cls="ml-[12px]" /><span className="ml-[15px]">新加卷 (G:)</span>
        <Crumb cls="ml-[12px]" /><span className="ml-[15px] text-[13px]">shejing</span>
        <Crumb cls="ml-[15px]" /><span className="ml-[14px]">超市管理系统（源码）</span>
        <Crumb cls="ml-[19px]" /><span className="ml-[15px] text-[13px]">SupermarketManager</span>
        <Crumb cls="ml-[15px]" />
      </div>
      <div className="ml-[8px] w-[482px] h-[33px] bg-[#fdfdfd] rounded-[3px] flex items-center pl-[15px] pr-[12px] pt-[2px] text-[#666] shrink-0">
        <span>在 SupermarketManager 中搜索</span><Search size={11} strokeWidth={1} className="ml-auto" />
      </div>
    </div>
    <div className="h-[55px] flex items-center pt-[2px] border-b border-[#d8d8d8] shrink-0 text-[#444]">
      <svg width="16" height="16" viewBox="0 0 16 16" className="ml-[20px]"><circle cx="8" cy="8" r="7.500" fill="none" stroke="#444" /><path d="M8 4.500v7M4.500 8h7" stroke="#1a78c2" /></svg>
      <span className="ml-[8px]">新建</span><Chev cls="ml-[5px]" />
      <CmdSep cls="ml-[16px]" />
      <Cmd cls="ml-[17px] text-[#a8c4d8]"><Scissors size={15} strokeWidth={1} className="-rotate-90" /></Cmd>
      <Cmd cls="ml-[31px] text-[#a8c4d8]"><Copy size={15} strokeWidth={1} /></Cmd>
      <Cmd cls="ml-[32px] text-[#a8c4d8]"><Clipboard size={15} strokeWidth={1} /></Cmd>
      <Cmd cls="ml-[32px] text-[#a8c4d8]"><svg width="16" height="16" viewBox="0 0 16 16"><rect x="2.500" y="1.500" width="11" height="13" rx="1" fill="none" stroke="#c0d0dc" /><text x="4.500" y="11" fontSize="9" fill="#88a8c0" fontFamily="Liberation Sans">A</text></svg></Cmd>
      <Cmd cls="ml-[31px] text-[#a8c4d8]"><Share size={14} strokeWidth={1} /></Cmd>
      <Cmd cls="ml-[33px] text-[#b8b8b8]"><Trash2 size={15} strokeWidth={1} /></Cmd>
      <CmdSep cls="ml-[17px]" />
      <ArrowUpDown size={15} strokeWidth={1} className="ml-[17px] text-[#1a78c2]" />
      <span className="ml-[8px]">排序</span><Chev cls="ml-[4px]" />
      <Menu size={16} strokeWidth={1} className="ml-[30px] text-[#333]" />
      <span className="ml-[8px]">查看</span><Chev cls="ml-[5px]" />
      <CmdSep cls="ml-[12px]" />
      <MoreHorizontal size={16} strokeWidth={2} className="ml-[19px] text-[#333]" />
      <svg width="15" height="13" viewBox="0 0 15 13" className="ml-auto"><rect x=".5" y=".5" width="14" height="12" rx="2" fill="none" stroke="#555" /><path d="M7.500.5v12" stroke="#1a78c2" /></svg>
      <span className="ml-[5px] mr-[24px] tracking-[0.5px]">预览</span>
    </div>
    <div className="flex-1 flex min-h-0">
      <NavPane />
      <div className="w-[17px] bg-[#f0f0f0] shrink-0 flex justify-center relative">
        <div className="absolute left-[6px] top-[18px] w-[3px] h-[774px] rounded-full bg-[#8a8a8a]" />
      </div>
      <FileList />
      <div className="flex-1 flex items-center justify-center text-[#666] pb-[6px]">选择要预览的文件。</div>
    </div>
  </div>
);

const Ime = () => (
  <div className="absolute left-[2310px] top-[647px] w-[194px] h-[30px]">
    <div className="absolute left-[27px] top-[3px] right-0 h-[25px] bg-white border-y border-[#c5d8e8] flex items-center text-[#1a6fc0]">
      <span className="ml-[10px] w-[16px] text-center font-bold text-[15px]">中</span>
      <span className="ml-[8px] w-[16px] text-center font-bold text-[13px] leading-none">°,</span>
      <svg width="14" height="16" viewBox="0 0 14 16" className="ml-[9px]"><rect x="4.500" y="0" width="5" height="10" rx="2.500" fill="#1a6fc0" /><path d="M1.500 7a5.500 5.500 0 0 0 11 0M7 12.500V16M4 15.500h6" stroke="#1a6fc0" fill="none" /></svg>
      <svg width="16" height="12" viewBox="0 0 16 12" className="ml-[8px]"><rect width="16" height="12" rx="2" fill="#1a6fc0" /><path d="M3 3.500h10M3 6h10M5 9h6" stroke="#fff" strokeDasharray="1.500 1" /></svg>
      <svg width="18" height="18" viewBox="0 0 18 18" className="ml-[8px]"><path d="M5 3L1 6l2 3 1-.5V16h10V8.500l1 .5 2-3-4-3-2 1.500H7z" fill="url(#gShirt)" /><circle cx="14.500" cy="2.500" r="2.500" fill="#e8563a" /></svg>
      <svg width="16" height="13" viewBox="0 0 16 13" className="ml-[6px]"><path d="M4 1h8a4 4 0 0 1 4 4v6l-2 1-2.500-3h-7L2 12l-2-1V5a4 4 0 0 1 4-4z" fill="#1a6fc0" /><path d="M4 5h3M5.500 3.500v3" stroke="#fff" /><circle cx="11.500" cy="5" r="1" fill="#fff" /></svg>
      <svg width="14" height="14" viewBox="0 0 14 14" className="ml-[8px]"><rect width="6" height="6" rx="1" fill="#1a6fc0" /><rect x="8" width="6" height="6" rx="1" fill="#1a6fc0" /><rect y="8" width="6" height="6" rx="1" fill="#1a6fc0" /><rect x="8" y="8" width="6" height="6" rx="1" fill="#1a6fc0" /></svg>
    </div>
    <svg width="31" height="30" viewBox="0 0 31 30" className="absolute left-0 top-0"><rect x="2" y="2" width="27" height="26" rx="3" fill="#f0591c" transform="rotate(-13 15 15)" /><text x="15.500" y="23" textAnchor="middle" fontFamily="Liberation Sans" fontWeight="700" fontSize="24" fill="#fff">S</text></svg>
  </div>
);

export default function App() {
  return (
    <div className="relative w-[2504px] h-[1328px] overflow-hidden bg-white flex flex-col text-[12px] font-['Noto_Sans','Noto_Sans_CJK_SC',sans-serif]">
      <Defs />
      <div className="h-[20px] bg-[#f0f0f0] flex items-center text-[#333] shrink-0">
        {menus.map(([m, c]) => <span key={m} className={c}>{m}</span>)}
      </div>
      <div className="h-[68px] bg-[#f0f0f0] border-b border-[#d8d8d8] flex items-start pt-[4px] shrink-0">
        <Tool cls="w-[58px]" label="连接" icon={<><PlugIco /><PlusBadge /></>} />
        <Tool cls="w-[82px]" label="新建查询" icon={<><QueryIco size={28} /><PlusBadge /></>} />
        <div className="w-px h-[61px] bg-[#e2e2e2] ml-[11px] mr-[16px]" />
        <Tool sel label="表" icon={<TableIco size={28} />} />
        <Tool label="视图" icon={<ViewIco size={28} />} />
        <Tool label="函数" icon={<FnIco />} />
        <Tool label="用户" icon={<UserIco />} />
        <Tool cls="w-[82px]" label="其它" icon={<><ToolsIco /><span className="absolute left-[46px] top-[22px]"><Caret /></span></>} />
        <Tool label="查询" icon={<QueryIco size={28} />} />
        <Tool label="备份" icon={<BackupIco size={28} />} />
        <Tool label="自动运行" icon={<RobotIco />} />
        <Tool label="模型" icon={<ModelIco />} />
        <Tool label="BI" icon={<BiIco />} />
      </div>
      <div className="flex-1 flex min-h-0">
        <Sidebar />
        <MainArea />
        <RightPanel />
      </div>
      <svg width="16" height="32" viewBox="0 0 16 32" className="absolute left-[2489px] top-[27px]"><path d="M16 0a15 15 0 0 0 0 30l-2-8c-3-2-3-8 0-12z" fill="#b4bcc6" /></svg>
      <Explorer />
      <Ime />
    </div>
  );
}
